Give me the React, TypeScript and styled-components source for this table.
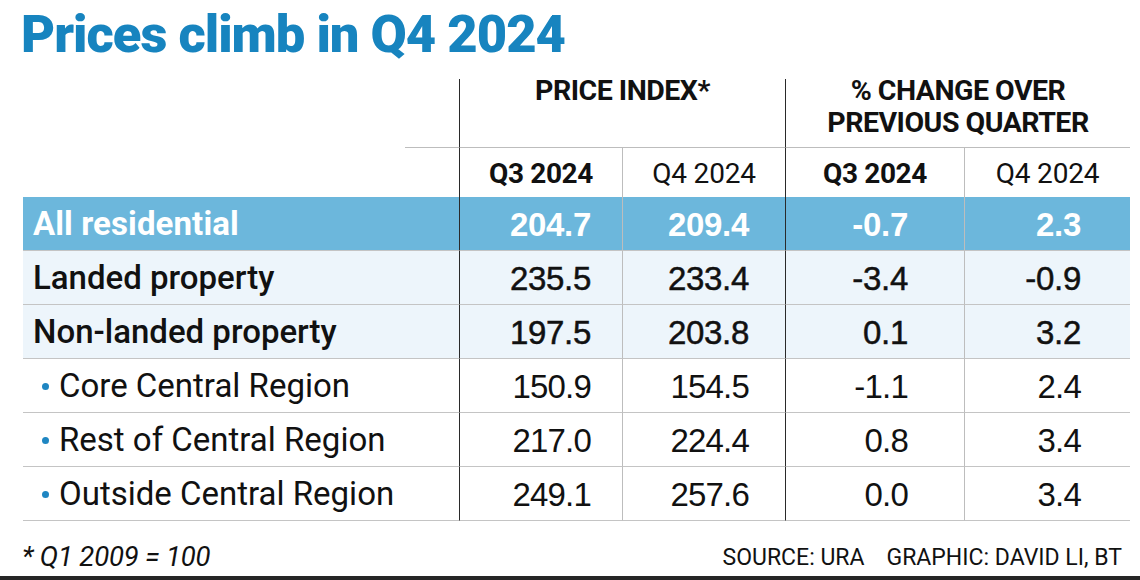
import React from "react";
import styled, { createGlobalStyle } from "styled-components";

const Global = createGlobalStyle`
  html, body { margin: 0; padding: 0; background: #fff; }
  body { font-family: Roboto, "Liberation Sans", sans-serif; color: #111; }
`;

const Page = styled.div`
  width: 1140px;
  height: 580px;
  overflow: hidden;
  display: flex;
  flex-direction: column;
  background: #fff;
`;

const Title = styled.h1`
  margin: 0;
  height: 79px;
  box-sizing: border-box;
  padding: 4px 0 0 21px;
  font-size: 52.5px;
  font-weight: 900;
  letter-spacing: -1px;
  line-height: 60px;
  color: #1784bf;
`;

const Grid = styled.div`
  margin-left: 23px;
  width: 1107px;
  display: grid;
  grid-template-columns: 436px 163px 163px 179px 166px;
  grid-template-rows: 69px 49px repeat(6, 54px);
`;

type Line = "dark" | "light" | "none";
const lineColor = (l: Line) =>
  l === "dark" ? "#2a2a2a" : l === "light" ? "#bdbdbd" : "transparent";

const HeadBlank = styled.div<{ $rule?: boolean }>`
  ${(p) =>
    p.$rule
      ? `background: linear-gradient(#bdbdbd, #bdbdbd) no-repeat right bottom / 54px 1px;`
      : ""}
`;

const GroupHead = styled.div`
  grid-column: span 2;
  border-left: 1px solid #2a2a2a;
  border-bottom: 1px solid #bdbdbd;
  font-size: 28.5px;
  font-weight: 700;
  line-height: 32px;
  letter-spacing: -0.5px;
  text-align: center;
  padding-top: 0;
  & > span {
    display: block;
    margin-top: -4px;
  }
`;

const SubHead = styled.div<{ $line: Line; $bold?: boolean }>`
  border-left: 1px solid ${(p) => lineColor(p.$line)};
  display: flex;
  align-items: center;
  justify-content: center;
  font-size: 28px;
  font-weight: ${(p) => (p.$bold ? 700 : 400)};
  letter-spacing: ${(p) => (p.$bold ? "-0.4px" : "-0.2px")};
  padding-top: 2px;
`;

type Kind = "total" | "main" | "sub";

const rowBg = (k: Kind) =>
  k === "total" ? "#6cb7dc" : k === "main" ? "#edf5fb" : "#fff";
const rowWeight = (k: Kind) => (k === "total" ? 700 : k === "main" ? 500 : 400);

const Label = styled.div<{ $kind: Kind }>`
  background: ${(p) => rowBg(p.$kind)};
  color: ${(p) => (p.$kind === "total" ? "#fff" : "#111")};
  border-bottom: 1px solid #c4c4c4;
  display: flex;
  align-items: center;
  gap: 10px;
  padding-left: ${(p) => (p.$kind === "sub" ? "19px" : "10px")};
  font-size: 33px;
  font-weight: ${(p) => rowWeight(p.$kind)};
  letter-spacing: ${(p) => (p.$kind === "total" ? "0.1px" : "0px")};
`;

const Bullet = styled.span`
  width: 7px;
  height: 7px;
  border-radius: 50%;
  background: #1f86c2;
  flex: none;
  margin-top: 2px;
`;

const Value = styled.div<{ $kind: Kind; $line: Line; $pad: number }>`
  background: ${(p) => rowBg(p.$kind)};
  color: ${(p) => (p.$kind === "total" ? "#fff" : "#111")};
  border-left: 1px solid ${(p) => lineColor(p.$line)};
  border-bottom: 1px solid #c4c4c4;
  display: flex;
  align-items: center;
  justify-content: flex-end;
  padding-right: ${(p) => p.$pad}px;
  padding-top: 2px;
  font-family: "Liberation Sans", Arial, sans-serif;
  font-size: 33px;
  font-weight: ${(p) => (p.$kind === "total" ? 700 : 400)};
  -webkit-text-stroke: ${(p) => (p.$kind === "main" ? "0.5px" : "0")} currentColor;
  letter-spacing: ${(p) => (p.$kind === "sub" ? "-0.8px" : "-0.3px")};
`;

const Footer = styled.div`
  margin: 0 18px 0 22px;
  flex: 1;
  display: flex;
  justify-content: space-between;
  align-items: flex-end;
  padding-bottom: 3px;
`;

const Note = styled.div`
  font-size: 27.5px;
  font-style: italic;
  letter-spacing: -0.2px;
`;

const Credit = styled.div`
  font-size: 23px;
  letter-spacing: 0px;
  padding-bottom: 2px;
`;

const Gap = styled.span`
  display: inline-block;
  width: 22px;
`;

const BottomBar = styled.div`
  height: 4px;
  background: #262626;
`;

const cols: { line: Line; pad: number }[] = [
  { line: "dark", pad: 31 },
  { line: "light", pad: 36 },
  { line: "dark", pad: 56 },
  { line: "light", pad: 49 },
];

const rows: { label: string; kind: Kind; values: string[] }[] = [
  { label: "All residential", kind: "total", values: ["204.7", "209.4", "-0.7", "2.3"] },
  { label: "Landed property", kind: "main", values: ["235.5", "233.4", "-3.4", "-0.9"] },
  { label: "Non-landed property", kind: "main", values: ["197.5", "203.8", "0.1", "3.2"] },
  { label: "Core Central Region", kind: "sub", values: ["150.9", "154.5", "-1.1", "2.4"] },
  { label: "Rest of Central Region", kind: "sub", values: ["217.0", "224.4", "0.8", "3.4"] },
  { label: "Outside Central Region", kind: "sub", values: ["249.1", "257.6", "0.0", "3.4"] },
];

export default function App() {
  return (
    <Page>
      <Global />
      <Title>Prices climb in Q4 2024</Title>
      <Grid>
        <HeadBlank $rule />
        <GroupHead>
          <span>PRICE INDEX*</span>
        </GroupHead>
        <GroupHead>
          <span>
            % CHANGE OVER
            <br />
            PREVIOUS QUARTER
          </span>
        </GroupHead>
        <HeadBlank />
        <SubHead $line="dark" $bold>Q3 2024</SubHead>
        <SubHead $line="light">Q4 2024</SubHead>
        <SubHead $line="dark" $bold>Q3 2024</SubHead>
        <SubHead $line="light">Q4 2024</SubHead>
        {rows.map((r) => (
          <React.Fragment key={r.label}>
            <Label $kind={r.kind}>
              {r.kind === "sub" && <Bullet />}
              {r.label}
            </Label>
            {r.values.map((v, i) => (
              <Value key={i} $kind={r.kind} $line={cols[i].line} $pad={cols[i].pad}>
                {v}
              </Value>
            ))}
          </React.Fragment>
        ))}
      </Grid>
      <Footer>
        <Note>* Q1 2009 = 100</Note>
        <Credit>
          SOURCE: URA<Gap />GRAPHIC: DAVID LI, BT
        </Credit>
      </Footer>
      <BottomBar />
    </Page>
  );
}
